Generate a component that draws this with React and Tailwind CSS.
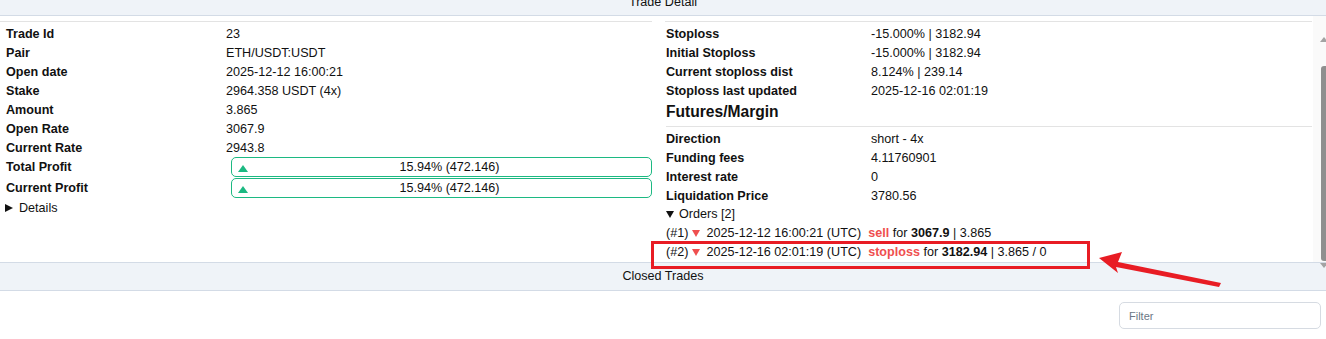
import React from "react";

const leftRows = [
  ["Trade Id", "23"],
  ["Pair", "ETH/USDT:USDT"],
  ["Open date", "2025-12-12 16:00:21"],
  ["Stake", "2964.358 USDT (4x)"],
  ["Amount", "3.865"],
  ["Open Rate", "3067.9"],
  ["Current Rate", "2943.8"],
];

const stopRows = [
  ["Stoploss", "-15.000% | 3182.94"],
  ["Initial Stoploss", "-15.000% | 3182.94"],
  ["Current stoploss dist", "8.124% | 239.14"],
  ["Stoploss last updated", "2025-12-16 02:01:19"],
];

const futRows = [
  ["Direction", "short - 4x"],
  ["Funding fees", "4.11760901"],
  ["Interest rate", "0"],
  ["Liquidation Price", "3780.56"],
];

const Row = ({ label, value, labelW }) => (
  <div className="flex h-[19px] pt-[1px] leading-[19px]">
    <div className={`${labelW} shrink-0 font-bold`}>{label}</div>
    <div>{value}</div>
  </div>
);

const ProfitRow = ({ label }) => (
  <div className="flex h-[21px]">
    <div className="w-[220px] shrink-0 pt-[1px] font-bold leading-[19px]">{label}</div>
    <div className="ml-[5px] flex h-[20px] flex-1 items-center rounded-[5px] border border-[#1cb982]">
      <span className="ml-[6px] mt-[3px] h-0 w-0 border-x-[5px] border-b-[7px] border-x-transparent border-b-[#1cb982]" />
      <span className="flex-1 text-center leading-[18px]">15.94% (472.146)</span>
    </div>
  </div>
);

const Order = ({ n, date, side, price, amount }) => (
  <div className="flex h-[19px] items-center pt-[1px] leading-[19px] whitespace-pre">
    <span>({n})</span>
    <span className="ml-[4px] mr-[6px] mt-[1px] h-0 w-0 border-x-[4px] border-t-[7px] border-x-transparent border-t-[#ef4f4f]" />
    <span>{date} (UTC)</span>
    <span className="ml-[7px] font-bold text-[#ef4f4f]">{side}</span>
    <span> for </span>
    <span className="font-bold">{price}</span>
    <span> | {amount}</span>
  </div>
);

export default function App() {
  return (
    <div
      className="relative h-[339px] w-[1326px] overflow-hidden bg-white text-[12.6px] text-[#111]"
      style={{ fontFamily: '"Liberation Sans", Arial, sans-serif' }}
    >
      {/* Trade Detail header */}
      <div className="h-[16px] overflow-hidden border-b border-[#d3dbe6] bg-[#eff3f8] text-center">
        <div className="-mt-[7px] leading-[19px]">Trade Detail</div>
      </div>

      <div className="flex h-[246px]">
        <div className="flex flex-1">
          {/* left column */}
          <div className="w-[652px] pt-[5px]">
            <div className="border-t border-[#e3e3e3] pl-[6px] pt-[2px]">
              {leftRows.map(([l, v]) => (
                <Row key={l} label={l} value={v} labelW="w-[220px]" />
              ))}
              <ProfitRow label="Total Profit" />
              <ProfitRow label="Current Profit" />
              <div className="flex h-[18px] items-center leading-[18px]">
                <span className="ml-[-1px] mr-[6px] h-0 w-0 border-y-[4px] border-l-[8px] border-y-transparent border-l-[#111]" />
                <span>Details</span>
              </div>
            </div>
          </div>

          {/* right column */}
          <div className="ml-[13px] flex-1 pt-[5px] pr-[1px]">
            <div className="border-t border-[#e3e3e3] pl-[1px] pt-[2px]">
              {stopRows.map(([l, v]) => (
                <Row key={l} label={l} value={v} labelW="w-[205px]" />
              ))}
              <div className="h-[27px] border-b border-[#e3e3e3] text-[15.6px] font-bold leading-[24px]">
                Futures/Margin
              </div>
              <div className="pt-[2px]">
                {futRows.map(([l, v]) => (
                  <Row key={l} label={l} value={v} labelW="w-[205px]" />
                ))}
                <div className="flex h-[18px] items-center leading-[18px]">
                  <span className="mr-[5px] mt-[1px] h-0 w-0 border-x-[4px] border-t-[7px] border-x-transparent border-t-[#111]" />
                  <span>Orders [2]</span>
                </div>
                <Order n="#1" date="2025-12-12 16:00:21" side="sell" price="3067.9" amount="3.865" />
                <Order n="#2" date="2025-12-16 02:01:19" side="stoploss" price="3182.94" amount="3.865 / 0" />
              </div>
            </div>
          </div>
        </div>

        {/* scrollbar */}
        <div className="relative w-[13px] bg-[#fafafa]">
          <span className="absolute left-[7px] top-[21px] h-0 w-0 border-x-[4px] border-b-[5px] border-x-transparent border-b-[#a3a3a3]" />
          <div className="absolute left-[8px] top-[50px] h-[195px] w-[6px] rounded-l-[3px] bg-[#8f8f8f]" />
          <span className="absolute left-[7px] top-[247px] h-0 w-0 border-x-[4px] border-t-[5px] border-x-transparent border-t-[#a3a3a3]" />
        </div>
      </div>

      {/* Closed Trades header */}
      <div className="flex h-[29px] items-center justify-center border-y border-[#d3dbe6] bg-[#eff3f8]">
        Closed Trades
      </div>

      <div className="flex justify-end pr-[5px] pt-[11px]">
        <input
          placeholder="Filter"
          className="h-[27px] w-[202px] rounded-[5px] border border-[#d6dbe2] px-[9px] text-[11px] placeholder:text-[#6b7785] outline-none"
        />
      </div>

      {/* annotation overlay */}
      <div className="pointer-events-none absolute left-[651px] top-[241px] h-[28px] w-[439px] border-[3px] border-[#e81c24]" />
      <svg className="pointer-events-none absolute left-0 top-0" width="1326" height="339">
        <polygon
          points="1099,258 1122,252 1118,262 1221,283 1219,287 1116,267 1118,273"
          fill="#e81c24"
        />
      </svg>
    </div>
  );
}
